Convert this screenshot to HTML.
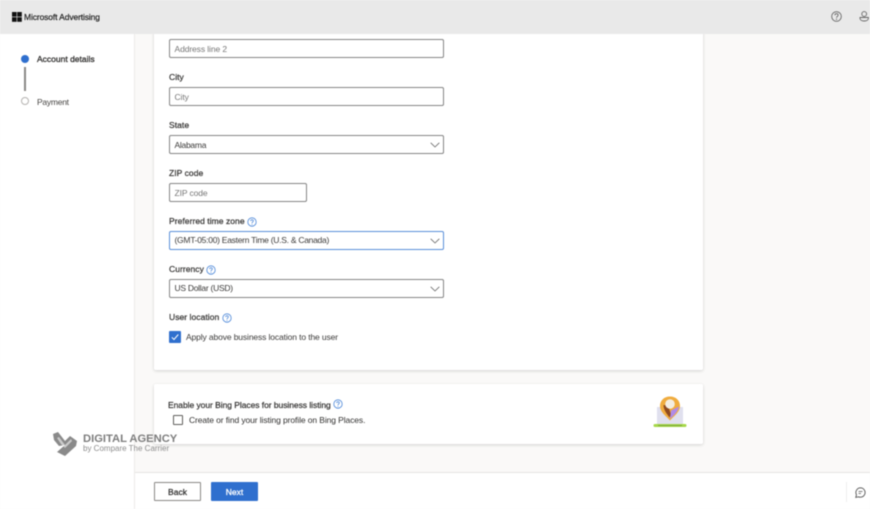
<!DOCTYPE html>
<html><head><meta charset="utf-8">
<style>
html,body{margin:0;padding:0}
body{width:870px;height:509px;position:relative;overflow:hidden;background:#faf9f8;font-family:"Liberation Sans",sans-serif;color:#323130;font-size:8.5px}
#w{position:absolute;left:0;top:0;width:870px;height:509px;filter:blur(.4px)}
.a{position:absolute;white-space:nowrap}
.l{position:absolute;left:169px;font-size:8.5px;color:#3b3a39;line-height:12px;-webkit-text-stroke:.25px #3b3a39;letter-spacing:.05px;white-space:nowrap}
.i{position:absolute;left:169px;width:273px;height:17px;border:1px solid #858585;border-radius:2px;background:#fff;line-height:18px;text-indent:4.500px;font-size:8.500px;color:#767676;letter-spacing:-.1px}
.v{color:#3b3a39;letter-spacing:-.27px;line-height:17px}
.chev{position:absolute;left:430px;width:10px;height:6px}
.q{position:absolute;width:10px;height:10px}
</style></head><body><div id="w">

<div class="a" style="left:0;top:34px;width:134px;height:475px;background:#fff;border-right:1px solid #edebe9"></div>
<div class="a" style="left:21px;top:55px;width:8px;height:8px;border-radius:50%;background:#2f6fce"></div>
<div class="a" style="left:24px;top:67px;width:1.500px;height:24px;background:#8a8886"></div>
<div class="a" style="left:21px;top:97px;width:6px;height:6px;border-radius:50%;border:1px solid #b5b3b1;background:#fff"></div>
<div class="a" style="left:37px;top:53px;font-size:8.500px;line-height:12px;color:#323130;-webkit-text-stroke:.3px #323130">Account details</div>
<div class="a" style="left:37px;top:96px;font-size:8.500px;line-height:12px;color:#484644;letter-spacing:-.25px">Payment</div>

<div class="a" style="left:154px;top:30px;width:549px;height:340px;background:#fff;border-radius:2px;box-shadow:0 1px 3px rgba(0,0,0,.16)"></div>
<div class="a" style="left:0;top:0;width:870px;height:34px;background:#e9e9e9"></div>
<svg class="a" style="left:12px;top:12px" width="10" height="10"><rect width="4.600" height="4.600" fill="#111"/><rect x="5.200" width="4.600" height="4.600" fill="#111"/><rect y="5.200" width="4.600" height="4.600" fill="#111"/><rect x="5.200" y="5.200" width="4.600" height="4.600" fill="#111"/></svg>
<div class="a" style="left:24px;top:11px;font-size:8.500px;line-height:12px;color:#222;letter-spacing:-.12px;-webkit-text-stroke:.2px #222">Microsoft Advertising</div>
<svg class="a" style="left:831px;top:11px" width="11" height="11" viewBox="0 0 11 11"><circle cx="5.500" cy="5.500" r="4.800" fill="none" stroke="#666" stroke-width=".9"/><path d="M3.900 4.300c0-2.100 3.200-2.100 3.200 0 0 1.200-1.600 1.200-1.600 2.400" fill="none" stroke="#666" stroke-width=".9"/><circle cx="5.500" cy="8.200" r=".6" fill="#666"/></svg>
<svg class="a" style="left:859px;top:11px" width="11" height="11" viewBox="0 0 11 11"><circle cx="5.200" cy="3" r="2.400" fill="none" stroke="#666" stroke-width=".9"/><path d="M1 6.500h8.400v.8c0 1.600-1.700 2.700-4.200 2.700S1 8.900 1 7.300z" fill="none" stroke="#666" stroke-width=".9"/></svg>

<div class="i" style="top:39px">Address line 2</div>
<div class="l" style="top:71px">City</div>
<div class="i" style="top:87px">City</div>
<div class="l" style="top:119px">State</div>
<div class="i v" style="top:135px;line-height:18px">Alabama</div>
<svg class="chev" style="top:142px" viewBox="0 0 10 6"><path d="M.7.8 5 5 9.300.8" fill="none" stroke="#666" stroke-width=".8"/></svg>
<div class="l" style="top:167px">ZIP code</div>
<div class="i" style="top:183px;width:136px">ZIP code</div>
<div class="l" style="top:215px">Preferred time zone</div>
<svg class="q" style="left:247px;top:216.500px" viewBox="0 0 10 10"><circle cx="5" cy="5" r="4.200" fill="none" stroke="#4a86d8" stroke-width=".8"/><path d="M3.700 4c0-1.700 2.600-1.700 2.600 0 0 1-1.300 1-1.300 2" fill="none" stroke="#4a86d8" stroke-width=".8"/><circle cx="5" cy="7.300" r=".5" fill="#4a86d8"/></svg>
<div class="i v" style="top:231px;border-color:#5b8fd9">(GMT-05:00) Eastern Time (U.S. &amp; Canada)</div>
<svg class="chev" style="top:238px" viewBox="0 0 10 6"><path d="M.7.8 5 5 9.300.8" fill="none" stroke="#666" stroke-width=".8"/></svg>
<div class="l" style="top:263px">Currency</div>
<svg class="q" style="left:206px;top:264.500px" viewBox="0 0 10 10"><circle cx="5" cy="5" r="4.200" fill="none" stroke="#4a86d8" stroke-width=".8"/><path d="M3.700 4c0-1.700 2.600-1.700 2.600 0 0 1-1.300 1-1.300 2" fill="none" stroke="#4a86d8" stroke-width=".8"/><circle cx="5" cy="7.300" r=".5" fill="#4a86d8"/></svg>
<div class="i v" style="top:279px">US Dollar (USD)</div>
<svg class="chev" style="top:286px" viewBox="0 0 10 6"><path d="M.7.8 5 5 9.300.8" fill="none" stroke="#666" stroke-width=".8"/></svg>
<div class="l" style="top:311px">User location</div>
<svg class="q" style="left:222px;top:312.500px" viewBox="0 0 10 10"><circle cx="5" cy="5" r="4.200" fill="none" stroke="#4a86d8" stroke-width=".8"/><path d="M3.700 4c0-1.700 2.600-1.700 2.600 0 0 1-1.300 1-1.300 2" fill="none" stroke="#4a86d8" stroke-width=".8"/><circle cx="5" cy="7.300" r=".5" fill="#4a86d8"/></svg>
<svg class="a" style="left:169px;top:331px" width="12" height="12" viewBox="0 0 12 12"><rect width="12" height="12" rx="1" fill="#2f6fce"/><path d="M2.800 6.300 5 8.500 9.300 3.500" fill="none" stroke="#fff" stroke-width="1"/></svg>
<div class="a" style="left:186px;top:331px;line-height:12px;color:#3b3a39;letter-spacing:-.12px">Apply above business location to the user</div>

<div class="a" style="left:154px;top:384px;width:549px;height:60px;background:#fff;border-radius:2px;box-shadow:0 1px 3px rgba(0,0,0,.16)"></div>
<div class="a" style="left:168px;top:399px;line-height:12px;font-size:8.500px;color:#323130;letter-spacing:-.05px;-webkit-text-stroke:.2px #323130">Enable your Bing Places for business listing</div>
<svg class="q" style="left:333px;top:399px" viewBox="0 0 10 10"><circle cx="5" cy="5" r="4.200" fill="none" stroke="#4a86d8" stroke-width=".8"/><path d="M3.700 4c0-1.700 2.600-1.700 2.600 0 0 1-1.300 1-1.300 2" fill="none" stroke="#4a86d8" stroke-width=".8"/><circle cx="5" cy="7.300" r=".5" fill="#4a86d8"/></svg>
<div class="a" style="left:173px;top:415px;width:8px;height:8px;border:1px solid #605e5c;border-radius:1px;background:#fff"></div>
<div class="a" style="left:189px;top:414px;line-height:12px;color:#323130;letter-spacing:-.1px">Create or find your listing profile on Bing Places.</div>

<svg class="a" style="left:652px;top:394px" width="36" height="36" viewBox="0 0 36 36">
<path d="M5 13h26v18H5z" fill="#e0e0ee"/>
<path d="M18 2.500c-6 0-10 4-10 9.500 0 6 6 10 10 14.500 4-4.500 10-8.500 10-14.500 0-5.500-4-9.500-10-9.500z" fill="#f0ac3e"/>
<path d="M11.500 11c0 5 3.500 9 6 12.500l1.500-3-3-9z" fill="#8e4a20"/>
<path d="M18 25c3.500-3.500 8-7 9-12.500l-8 4z" fill="#b08ae8"/>
<circle cx="18" cy="10" r="4.800" fill="#f4eee2"/>
<rect x="1.500" y="30" width="33" height="3" rx="1.500" fill="#a6d84a"/>
<rect x="6" y="31" width="24" height="1" fill="#7da83a"/>
</svg>

<div class="a" style="left:135px;top:472px;width:735px;height:37px;background:#fff;border-top:1px solid #e6e4e2;box-sizing:border-box"></div>
<div class="a" style="left:154px;top:482px;width:45px;height:17px;border:1px solid #8a8886;border-radius:1px;background:#fff;text-align:center;line-height:18px;color:#323130;-webkit-text-stroke:.25px #323130">Back</div>
<div class="a" style="left:211px;top:482px;width:47px;height:19px;border-radius:1px;background:#2f6fce;text-align:center;line-height:20px;color:#fff;-webkit-text-stroke:.25px #fff">Next</div>
<div class="a" style="left:846px;top:482px;width:1px;height:20px;background:#eee"></div>
<svg class="a" style="left:855px;top:487px" width="11" height="11" viewBox="0 0 11 11"><path d="M5.500.8a4.700 4.700 0 1 1-2 9L.8 10.400l.7-2.600A4.700 4.700 0 0 1 5.500.8z" fill="none" stroke="#555" stroke-width=".9"/><path d="M3.500 4.500h4M3.500 6.500h2.500" stroke="#555" stroke-width=".8"/></svg>

<svg class="a" style="left:52px;top:431px" width="26" height="26" viewBox="0 0 26 26"><path d="M1 3 6 1 13 10 18 5 25 10 24 15 13 25 5 21 13 14 7 15 2 9z" fill="#8a8a8a"/><path d="M7 6 13 14 19 8 20 10 13 17 9 13 5 7z" fill="#fff" opacity=".55"/></svg>
<div class="a" style="left:83px;top:433px;font-size:11.200px;line-height:13px;font-weight:bold;color:#7d7d7d">DIGITAL AGENCY</div>
<div class="a" style="left:83px;top:444px;font-size:8px;line-height:10px;color:#8c8c8c">by Compare The Carrier</div>
</div></body></html>
